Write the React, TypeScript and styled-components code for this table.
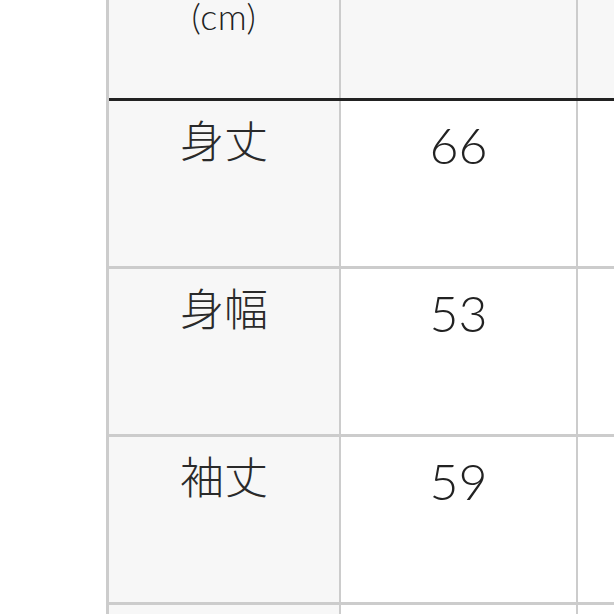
import React from "react";
import styled, { createGlobalStyle } from "styled-components";

const Global = createGlobalStyle`
  html, body { margin: 0; padding: 0; background: #ffffff; overflow: hidden; }
  body { font-family: "Noto Sans CJK JP", "Noto Sans", sans-serif; color: #2a2a2a; }
`;

const Page = styled.div`
  width: 614px;
  height: 614px;
  overflow: hidden;
  padding-left: 106px;
  box-sizing: border-box;
`;

const Table = styled.div`
  width: 700px;
  margin-top: -40px;
  border-left: 3px solid #cccccc;
  display: flex;
  flex-direction: column;
`;

const Row = styled.div<{ $head?: boolean }>`
  display: grid;
  grid-template-columns: 232px 237px 200px;
  height: ${(p) => (p.$head ? "141px" : "168px")};
  box-sizing: border-box;
  border-bottom: 3px solid ${(p) => (p.$head ? "#222222" : "#cccccc")};
`;

const Cell = styled.div<{ $shade?: boolean }>`
  box-sizing: border-box;
  border-right: 2px solid #cccccc;
  background: ${(p) => (p.$shade ? "#f7f7f7" : "#ffffff")};
  display: flex;
  justify-content: center;
  align-items: flex-start;
`;

const HeadText = styled.div`
  margin-top: 38px;
  font-family: "Lato", "Noto Sans", sans-serif;
  font-size: 36px;
  line-height: 1;
  font-weight: 300;
  letter-spacing: 0.5px;
  color: #222222;
`;

const Label = styled.div`
  margin-top: 12px;
  font-family: "Noto Sans CJK JP", sans-serif;
  font-weight: 300;
  font-size: 44px;
  line-height: 52px;
  color: #2a2a2a;
`;

const Value = styled.div`
  margin-top: 19px;
  font-family: "Lato", "Noto Sans", sans-serif;
  font-weight: 300;
  font-size: 50px;
  line-height: 1;
  color: #222222;
`;

const rows = [
  { label: "身丈", value: "66" },
  { label: "身幅", value: "53" },
  { label: "袖丈", value: "59" },
  { label: "", value: "" },
];

export default function App() {
  return (
    <>
      <Global />
      <Page>
        <Table>
          <Row $head>
            <Cell $shade>
              <HeadText>(cm)</HeadText>
            </Cell>
            <Cell $shade />
            <Cell $shade />
          </Row>
          {rows.map((r, i) => (
            <Row key={i}>
              <Cell $shade>
                <Label>{r.label}</Label>
              </Cell>
              <Cell>
                <Value>{r.value}</Value>
              </Cell>
              <Cell />
            </Row>
          ))}
        </Table>
      </Page>
    </>
  );
}
